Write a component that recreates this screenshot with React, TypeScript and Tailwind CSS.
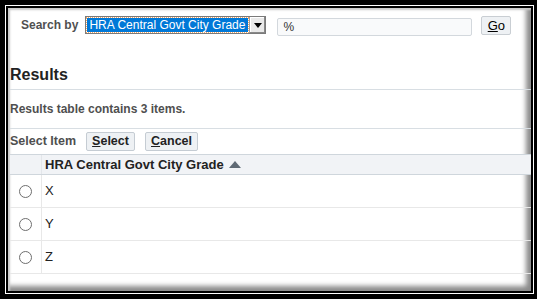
import React from "react";

function Radio() {
  return (
    <span className="inline-block w-[13px] h-[13px] rounded-full border border-[#6e6e6e] bg-white" />
  );
}

export default function App() {
  const rows = ["X", "Y", "Z"];
  return (
    <div
      className="w-[537px] h-[299px] bg-black pt-[5px] pl-[5px] pr-[3px] pb-[5px]"
      style={{ fontFamily: '"Liberation Sans", Arial, sans-serif' }}
    >
      <div className="w-full h-full border border-white">
        <div className="w-full h-full border-2 border-black">
          <div className="w-full h-full bg-white shadow-[inset_2px_2px_2px_#c8c8c8,inset_-5px_-5px_5px_#8a8a8a] pl-[2px] pt-[7px]">
            {/* Search row */}
            <div className="flex items-center h-[20px] pl-[11px]">
              <span className="text-[12px] font-bold text-[#505050] mr-[7px]">Search by</span>
              <div className="flex h-[18px] w-[181px] border border-[#7a7a7a] bg-white items-stretch">
                <div className="flex-1 m-[1px] bg-[#0078d7] outline-1 outline-dotted outline-[#f4a460] flex items-center pl-[2px]">
                  <span className="text-[12px] text-white leading-none whitespace-nowrap">HRA Central Govt City Grade</span>
                </div>
                <div className="w-[16px] bg-[#e9e9e9] border-l border-[#a0a0a0] flex items-center justify-center shadow-[inset_-1px_-1px_0_#888,inset_1px_1px_0_#fff]">
                  <svg width="8" height="5" viewBox="0 0 8 5"><path d="M0 0h8L4 5z" fill="#000" /></svg>
                </div>
              </div>
              <div className="ml-[11px] w-[195px] h-[18px] mt-[3px] border border-[#d3d8dd] bg-[#f9fafb] rounded-[2px] flex items-center pl-[5px]">
                <span className="text-[12px] text-[#333]">%</span>
              </div>
              <div className="ml-[9px] w-[30px] h-[19px] mt-[1px] border border-[#c9ced3] bg-[#eef1f4] rounded-[2px] flex items-center justify-center">
                <span className="text-[13px] text-black"><span className="underline">G</span>o</span>
              </div>
            </div>

            {/* Results header */}
            <div className="mt-[30px] text-[16px] font-bold text-[#222] leading-[19px]">Results</div>
            <div className="mt-[5px] border-t border-[#d8dee3]" />
            <div className="h-[38px] flex items-center">
              <span className="text-[12px] font-bold text-[#4f4f4f]">Results table contains 3 items.</span>
            </div>
            <div className="border-t border-[#d8dee3]" />
            <div className="h-[25px] flex items-center">
              <span className="text-[12.5px] font-bold text-[#4f4f4f] mr-[10px]">Select Item</span>
              <div className="w-[49px] h-[19px] border border-[#c5ccd3] bg-[#eef1f4] rounded-[2px] flex items-center justify-center">
                <span className="text-[12.5px] font-bold text-[#222]"><span className="underline">S</span>elect</span>
              </div>
              <div className="ml-[10px] w-[53px] h-[19px] border border-[#c5ccd3] bg-[#eef1f4] rounded-[2px] flex items-center justify-center">
                <span className="text-[12.5px] font-bold text-[#222]"><span className="underline">C</span>ancel</span>
              </div>
            </div>

            {/* Table */}
            <div className="border-t border-b border-[#cfd6dc] bg-[#f1f3f6] h-[21px] flex">
              <div className="w-[32px] border-r border-[#e3e6ea]" />
              <div className="flex items-center pl-[3px]">
                <span className="text-[13px] font-bold text-[#222]">HRA Central Govt City Grade</span>
                <svg className="ml-[5px]" width="12" height="7" viewBox="0 0 12 7"><path d="M0 7L6 0l6 7z" fill="#5f6a75" /></svg>
              </div>
            </div>
            {rows.map((r) => (
              <div key={r} className="h-[33px] flex border-b border-[#e8e8e8]">
                <div className="w-[32px] border-r border-[#e8e8e8] flex items-center justify-center">
                  <Radio />
                </div>
                <div className="flex items-center pl-[3px]">
                  <span className="text-[13px] text-[#222]">{r}</span>
                </div>
              </div>
            ))}
          </div>
        </div>
      </div>
    </div>
  );
}
